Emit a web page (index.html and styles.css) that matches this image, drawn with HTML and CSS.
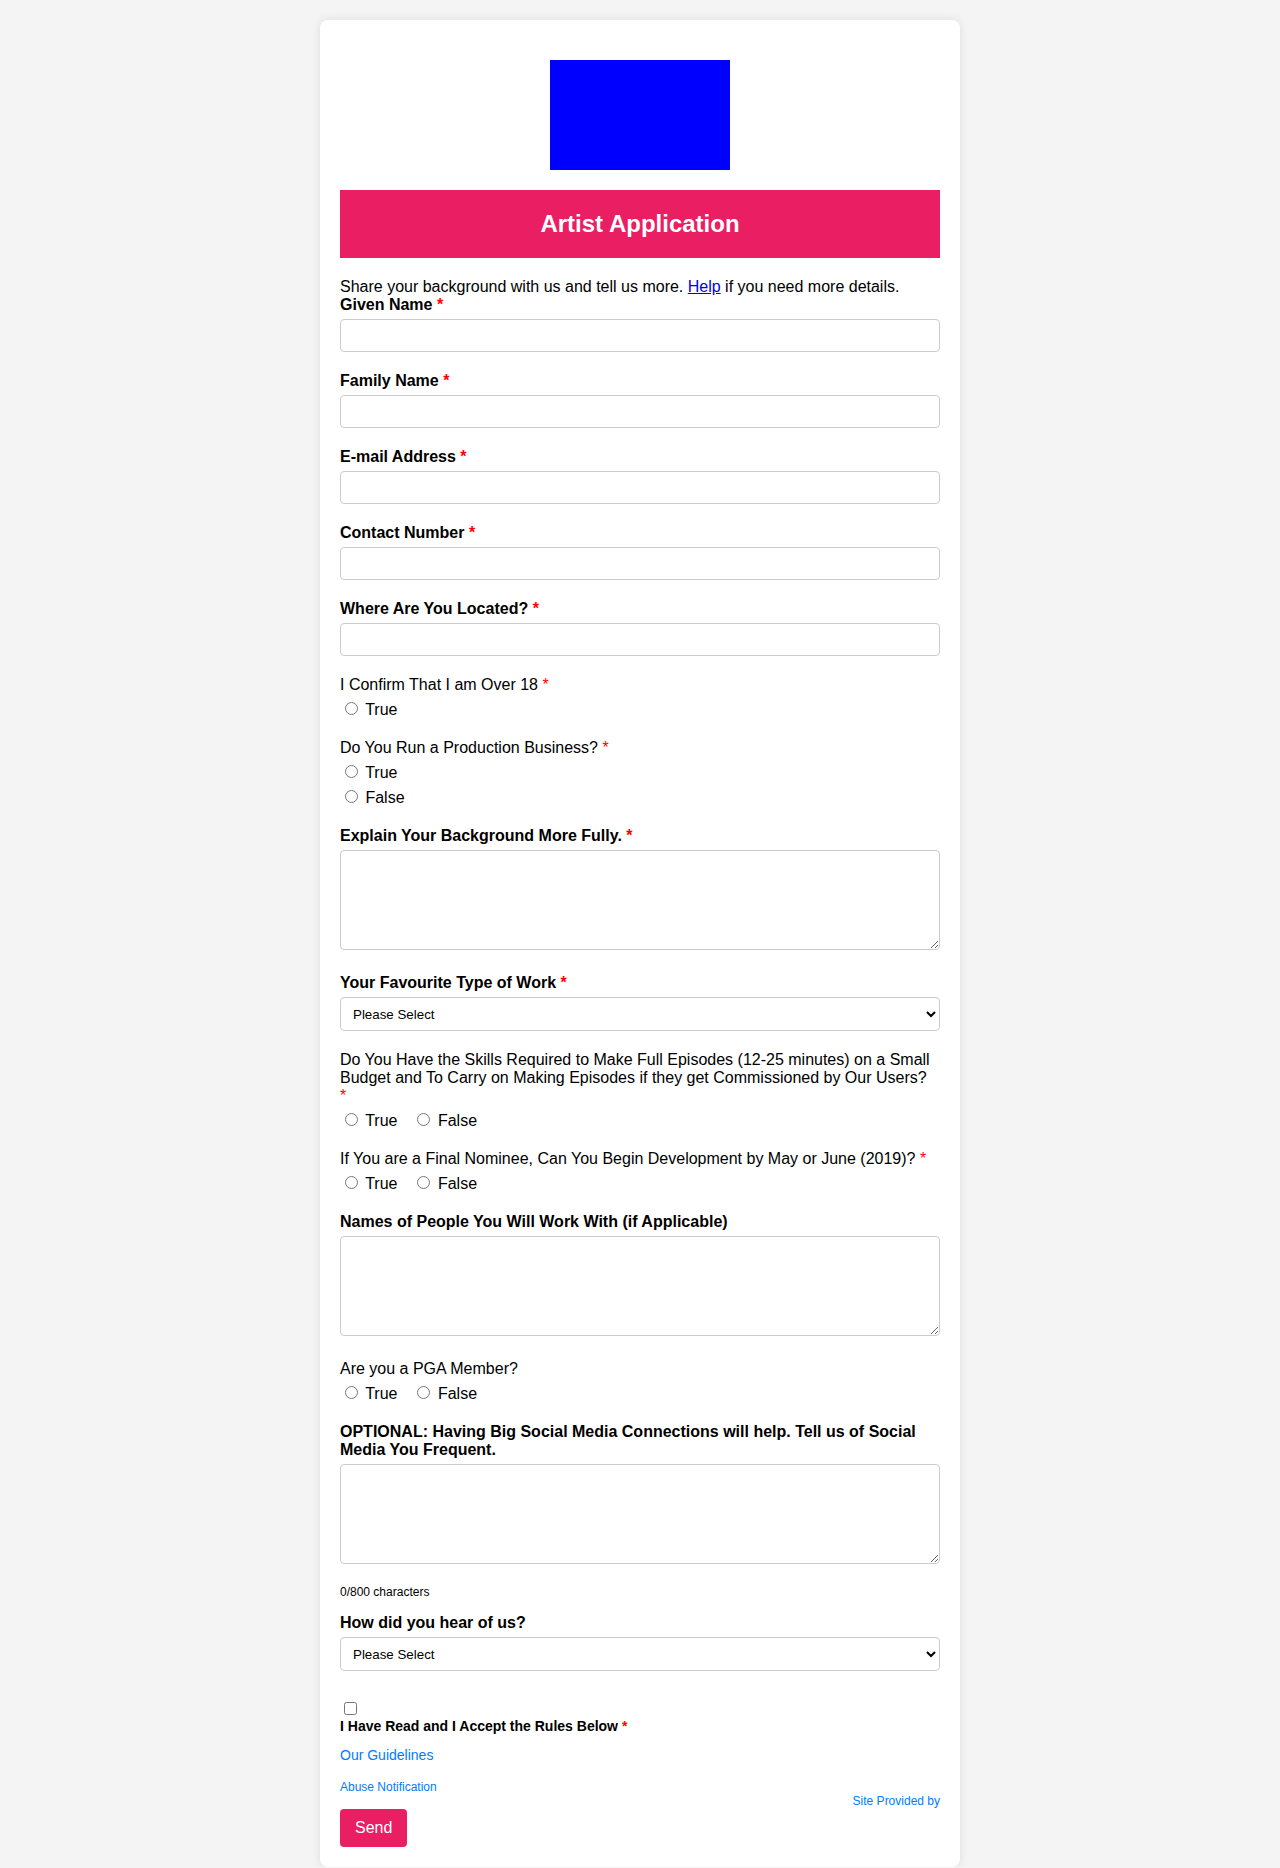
FILE: index.html
```html
<!DOCTYPE html>
<html lang="en">
<head>
<meta charset="utf-8">
<title>Artist Application</title>
<link rel="stylesheet" href="styles.css">
</head>
<body>
<div class="card">
  <div class="logo-wrap"><div class="logo"></div></div>
  <div class="header"><h1>Artist Application</h1></div>
  <p class="intro">Share your background with us and tell us more. <a href="#" class="help">Help</a> if you need more details.</p>
  <form>
    <div class="group">
      <label class="field-label">Given Name <span class="req">*</span></label>
      <input type="text" class="text-input">
    </div>
    <div class="group">
      <label class="field-label">Family Name <span class="req">*</span></label>
      <input type="text" class="text-input">
    </div>
    <div class="group">
      <label class="field-label">E-mail Address <span class="req">*</span></label>
      <input type="email" class="text-input">
    </div>
    <div class="group">
      <label class="field-label">Contact Number <span class="req">*</span></label>
      <input type="text" class="text-input">
    </div>
    <div class="group">
      <label class="field-label">Where Are You Located? <span class="req">*</span></label>
      <input type="text" class="text-input">
    </div>
    <div class="group">
      <div class="q-label">I Confirm That I am Over 18 <span class="req">*</span></div>
      <div class="radio-list">
        <label class="opt"><input type="radio" name="over18"> True</label>
      </div>
    </div>
    <div class="group">
      <div class="q-label">Do You Run a Production Business? <span class="req">*</span></div>
      <div class="radio-list">
        <label class="opt"><input type="radio" name="biz"> True</label>
        <label class="opt"><input type="radio" name="biz"> False</label>
      </div>
    </div>
    <div class="group">
      <label class="field-label">Explain Your Background More Fully. <span class="req">*</span></label>
      <textarea class="text-area"></textarea>
    </div>
    <div class="group">
      <label class="field-label">Your Favourite Type of Work <span class="req">*</span></label>
      <select class="select"><option>Please Select</option></select>
    </div>
    <div class="group">
      <div class="q-label">Do You Have the Skills Required to Make Full Episodes (12-25 minutes) on a Small Budget and To Carry on Making Episodes if they get Commissioned by Our Users? <span class="req req-block">*</span></div>
      <div class="radio-row">
        <label class="opt"><input type="radio" name="skills"> True</label>
        <label class="opt"><input type="radio" name="skills"> False</label>
      </div>
    </div>
    <div class="group">
      <div class="q-label">If You are a Final Nominee, Can You Begin Development by May or June (2019)? <span class="req">*</span></div>
      <div class="radio-row">
        <label class="opt"><input type="radio" name="nominee"> True</label>
        <label class="opt"><input type="radio" name="nominee"> False</label>
      </div>
    </div>
    <div class="group">
      <label class="field-label">Names of People You Will Work With (if Applicable)</label>
      <textarea class="text-area"></textarea>
    </div>
    <div class="group">
      <div class="q-label">Are you a PGA Member?</div>
      <div class="radio-row">
        <label class="opt"><input type="radio" name="pga"> True</label>
        <label class="opt"><input type="radio" name="pga"> False</label>
      </div>
    </div>
    <div class="group-tight">
      <label class="field-label">OPTIONAL: Having Big Social Media Connections will help. Tell us of Social Media You Frequent.</label>
      <textarea class="text-area"></textarea>
    </div>
    <div class="char-count">0/800 characters</div>
    <div class="group">
      <label class="field-label">How did you hear of us?</label>
      <select class="select"><option>Please Select</option></select>
    </div>
    <div class="agree">
      <input type="checkbox" class="check">
      <label class="agree-label">I Have Read and I Accept the Rules Below <span class="req">*</span></label>
    </div>
    <a href="#" class="guidelines">Our Guidelines</a>
    <a href="#" class="abuse">Abuse Notification</a>
    <div class="provided"><a href="#">Site Provided by</a></div>
    <button type="button" class="send">Send</button>
  </form>
</div>
</body>
</html>
```
FILE: styles.css
```css
html, body {
  margin: 0;
  padding: 0;
}
body {
  background: #f4f4f4;
  font-family: "Liberation Sans", Arial, sans-serif;
  font-size: 16px;
  line-height: 18px;
  color: #000;
  padding: 20px 0 0;
}
.card {
  width: 600px;
  margin: 0 auto;
  background: #fff;
  padding: 20px;
  border-radius: 8px;
  box-shadow: 0 0 10px rgba(0, 0, 0, 0.1);
}
.logo-wrap {
  padding: 20px 0;
}
.logo {
  width: 180px;
  height: 110px;
  margin: 0 auto;
  background: #0000ff;
}
.header {
  background: #e91e63;
  color: #fff;
  text-align: center;
  padding: 20px;
  margin-bottom: 20px;
}
.header h1 {
  margin: 0;
  font-size: 24px;
  line-height: 28px;
  font-weight: bold;
}
.intro {
  margin: 0;
}
.help {
  color: #0000ee;
  text-decoration: underline;
}
form {
  margin: 0;
}
.group {
  margin-bottom: 20px;
}
.group-tight {
  margin-bottom: 0;
}
.field-label {
  display: block;
  font-weight: bold;
  margin-bottom: 5px;
}
.q-label {
  margin-bottom: 5px;
}
.req {
  color: #ff0000;
}
.req-block {
  display: block;
}
.text-input {
  display: block;
  width: 100%;
  box-sizing: border-box;
  height: 33px;
  padding: 8px;
  border: 1px solid #ccc;
  border-radius: 4px;
  font-family: "Liberation Sans", Arial, sans-serif;
  font-size: 13.333px;
  margin: 0;
  background: #fff;
}
.text-area {
  width: 100%;
  box-sizing: border-box;
  height: 100px;
  padding: 8px;
  border: 1px solid #ccc;
  border-radius: 4px;
  font-family: "Liberation Sans", Arial, sans-serif;
  font-size: 13.333px;
  margin: 0;
  vertical-align: baseline;
}
.select {
  display: block;
  width: 100%;
  box-sizing: border-box;
  height: 34px;
  padding: 0 8px;
  border: 1px solid #ccc;
  border-radius: 4px;
  font-family: "Liberation Sans", Arial, sans-serif;
  font-size: 13.333px;
  color: #000;
  background: #fff;
  margin: 0;
}
.radio-list .opt {
  display: block;
  line-height: 20px;
  height: 20px;
  margin-bottom: 5px;
}
.radio-list .opt:last-child {
  margin-bottom: 0;
}
.radio-row {
  display: flex;
  gap: 15px;
  line-height: 20px;
  height: 20px;
}
.opt input {
  margin: 3px 3px 0 5px;
}
.char-count {
  font-size: 12px;
  line-height: 14px;
  margin: 17px 0 15px;
}
.agree {
  padding-top: 8px;
}
.check {
  display: block;
  margin: 3px 3px 3px 4px;
  width: 13px;
  height: 13px;
}
.agree-label {
  display: block;
  font-size: 14px;
  line-height: 16px;
  font-weight: bold;
}
.guidelines {
  display: block;
  margin-top: 13px;
  font-size: 14px;
  line-height: 16px;
  color: #007bff;
  text-decoration: none;
}
.abuse {
  display: block;
  margin-top: 17px;
  font-size: 12px;
  line-height: 14px;
  color: #007bff;
  text-decoration: none;
}
.provided {
  text-align: right;
  font-size: 12px;
  line-height: 15px;
}
.provided a {
  color: #007bff;
  text-decoration: none;
}
.send {
  display: block;
  background: #e91e63;
  color: #fff;
  border: none;
  border-radius: 4px;
  padding: 10px 15px;
  font-family: "Liberation Sans", Arial, sans-serif;
  font-size: 16px;
  line-height: 18px;
  margin: 0;
  cursor: pointer;
}
```
